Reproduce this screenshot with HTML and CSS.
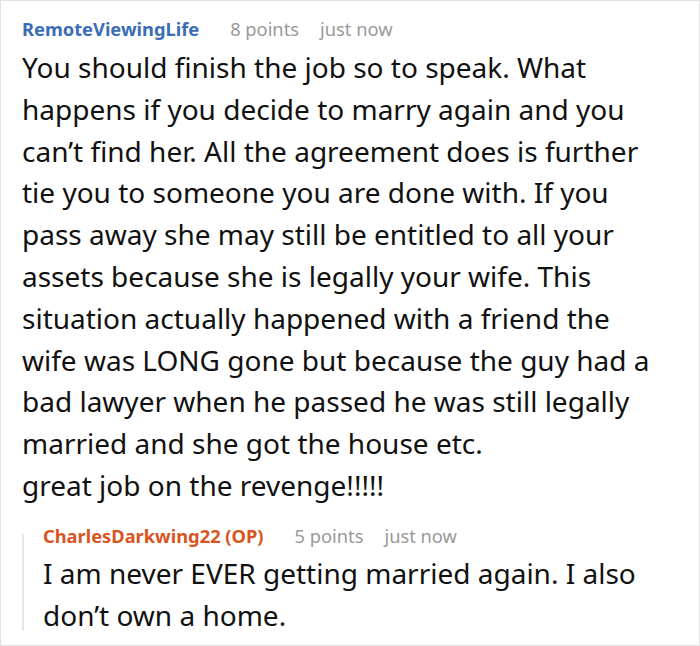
FILE: index.html
```html
<!DOCTYPE html>
<html>
<head>
<meta charset="utf-8">
<link rel="stylesheet" href="styles.css">
</head>
<body>
<div class="card">
  <div class="comment">
    <div class="meta">
      <span class="author">RemoteViewingLife</span>
      <span class="info">8 points</span>
      <span class="info">just now</span>
    </div>
    <div class="text">You should finish the job so to speak. What happens if you decide to marry again and you can’t find her. All the agreement does is further tie you to someone you are done with. If you pass away she may still be entitled to all your assets because she is legally your wife. This situation actually happened with a friend the wife was LONG gone but because the guy had a bad lawyer when he passed he was still legally married and she got the house etc.<br>great job on the revenge!!!!!</div>
  </div>
  <div class="reply">
    <div class="meta">
      <span class="author op">CharlesDarkwing22 (OP)</span>
      <span class="info">5 points</span>
      <span class="info">just now</span>
    </div>
    <div class="text reply-text">I am never EVER getting married again. I also don’t own a home.</div>
  </div>
</div>
</body>
</html>
```
FILE: styles.css
```css
html, body {
  margin: 0;
  padding: 0;
  background: #ffffff;
}
body {
  font-family: "Noto Sans", "Open Sans", sans-serif;
  color: #111111;
}
.card {
  box-sizing: border-box;
  width: 700px;
  height: 646px;
  border: 1px solid #e2e2e2;
  padding: 16px 34px 0 21px;
  overflow: hidden;
}
.meta {
  display: flex;
  align-items: baseline;
  gap: 21px;
  font-size: 18.3px;
  line-height: 24px;
}
.author {
  font-weight: 700;
  color: #3a6db5;
  margin-right: 10px;
}
.author.op {
  color: #d9541e;
}
.info {
  color: #999999;
}
.text {
  font-size: 28px;
  line-height: 41.8px;
  margin-top: 6px;
}
.reply {
  position: relative;
  margin-top: 17px;
  padding-left: 21px;
}
.reply::before {
  content: "";
  position: absolute;
  left: 0;
  top: 10px;
  bottom: 6px;
  width: 2px;
  background: #e6e6e6;
}
.reply-text {
  margin-top: 5.7px;
}
```
